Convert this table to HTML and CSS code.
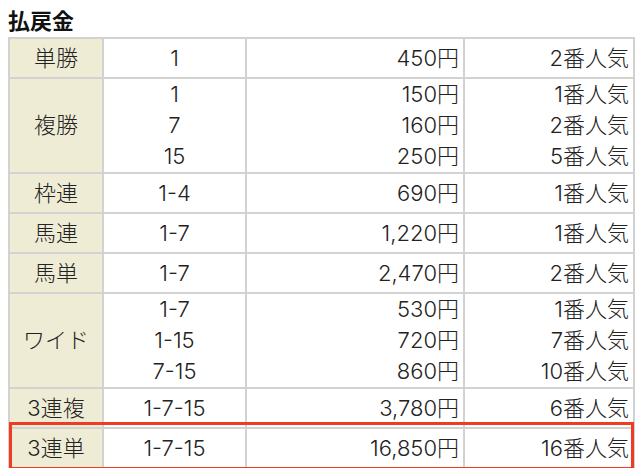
FILE: index.html
```html
<!DOCTYPE html>
<html lang="ja">
<head>
<meta charset="utf-8">
<title>払戻金</title>
<link rel="stylesheet" href="styles.css">
</head>
<body>
<div class="page">
  <h2 class="title">払戻金</h2>
  <div class="table-wrap">
    <table class="payout">
      <colgroup>
        <col class="c-type"><col class="c-num"><col class="c-pay"><col class="c-pop">
      </colgroup>
      <tbody>
        <tr><th>単勝</th><td class="num">1</td><td class="pay">450円</td><td class="pop">2番人気</td></tr>
        <tr><th>複勝</th><td class="num">1<br>7<br>15</td><td class="pay">150円<br>160円<br>250円</td><td class="pop">1番人気<br>2番人気<br>5番人気</td></tr>
        <tr><th>枠連</th><td class="num">1-4</td><td class="pay">690円</td><td class="pop">1番人気</td></tr>
        <tr><th>馬連</th><td class="num">1-7</td><td class="pay">1,220円</td><td class="pop">1番人気</td></tr>
        <tr><th>馬単</th><td class="num">1-7</td><td class="pay">2,470円</td><td class="pop">2番人気</td></tr>
        <tr><th>ワイド</th><td class="num">1-7<br>1-15<br>7-15</td><td class="pay">530円<br>720円<br>860円</td><td class="pop">1番人気<br>7番人気<br>10番人気</td></tr>
        <tr><th>3連複</th><td class="num">1-7-15</td><td class="pay">3,780円</td><td class="pop">6番人気</td></tr>
        <tr><th>3連単</th><td class="num">1-7-15</td><td class="pay">16,850円</td><td class="pop">16番人気</td></tr>
      </tbody>
    </table>
    <div class="highlight"></div>
  </div>
</div>
</body>
</html>
```

FILE: styles.css
```css
html, body {
  margin: 0;
  padding: 0;
  background: #ffffff;
}

.page {
  padding: 4px 8px 0 8px;
  font-family: "Noto Sans CJK JP", "Noto Sans", sans-serif;
  color: #222222;
}

.title {
  margin: 0 0 3px 0;
  font-size: 22px;
  line-height: 30px;
  font-weight: bold;
  color: #111111;
}

.table-wrap {
  position: relative;
  width: 625px;
}

.payout {
  width: 625px;
  border-collapse: collapse;
  table-layout: fixed;
  font-family: "Inter", "Noto Sans CJK JP", sans-serif;
  font-size: 22px;
  font-weight: 300;
}

.c-type { width: 94px; }
.c-num { width: 143px; }
.c-pay { width: 218px; }
.c-pop { width: 170px; }

.payout th,
.payout td {
  border: 2px solid #d2d2d2;
  padding: 0 4px;
  height: 38px;
  line-height: 31px;
  font-weight: 300;
  vertical-align: middle;
}

.payout th {
  background: #efecd6;
  text-align: center;
}

.payout .num {
  text-align: center;
}

.payout .pay,
.payout .pop {
  text-align: right;
}

.highlight {
  position: absolute;
  left: 1px;
  right: -1px;
  bottom: -1px;
  height: 42px;
  border: 3px solid #ef3b24;
  pointer-events: none;
}
```
